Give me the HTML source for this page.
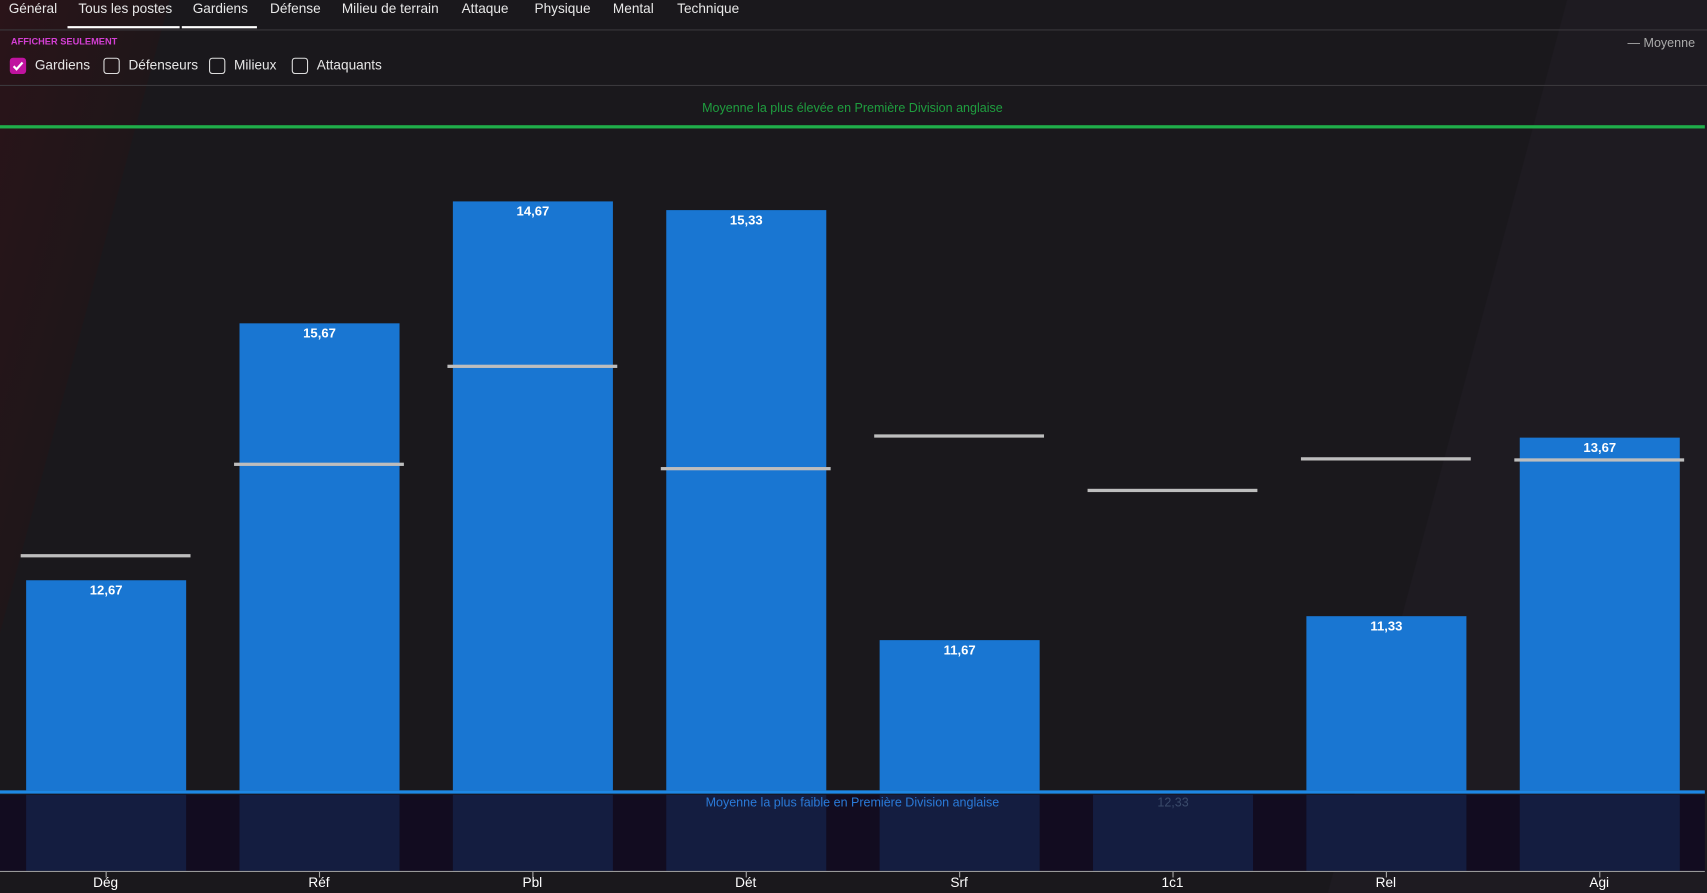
<!DOCTYPE html>
<html><head><meta charset="utf-8"><style>
html,body{margin:0;padding:0;background:#1a181c;overflow:hidden;width:1707px;height:893px}
#w{position:absolute;left:0;top:0;width:1568px;height:820px;transform:scale(1.08865);transform-origin:0 0;font-family:"Liberation Sans",sans-serif;color:#e6e6e6;
background:linear-gradient(105deg,#2a1419 0px,#1f1619 150px,#1a181c 151px,#1a181c 1390px,#1e1b21 1391px,#1e1b21 1568px)}
.a{position:absolute;white-space:nowrap}
.tab{top:1px;font-size:12.5px;color:#e8e8e8}
.cb{position:absolute;top:53px;width:13px;height:13px;border:1.5px solid #ddd;border-radius:3px}
.lbl{top:53px;font-size:12.5px}
.bar{position:absolute;width:147px;background:#1976d2;bottom:94px}
.val{position:absolute;width:147px;text-align:center;font-size:12px;font-weight:bold;color:#fff}
.avg{position:absolute;width:156px;height:3px;background:#bdbdbd}
.col{position:absolute;top:730px;height:70px;width:147px;background:#141d40}
.x{position:absolute;top:804px;width:100px;text-align:center;font-size:12.5px;color:#fff}
.tk{position:absolute;top:801px;width:1px;height:5px;background:#aaa}
</style></head><body><div id="w">
<div class="a tab" style="left:8px">Général</div>
<div class="a tab" style="left:72px">Tous les postes</div>
<div class="a tab" style="left:177px">Gardiens</div>
<div class="a tab" style="left:248px">Défense</div>
<div class="a tab" style="left:314px">Milieu de terrain</div>
<div class="a tab" style="left:424px">Attaque</div>
<div class="a tab" style="left:491px">Physique</div>
<div class="a tab" style="left:563px">Mental</div>
<div class="a tab" style="left:622px">Technique</div>
<div class="a" style="left:62px;top:24px;width:103px;height:2px;background:#fff"></div>
<div class="a" style="left:167px;top:24px;width:69px;height:2px;background:#fff"></div>
<div class="a" style="left:0;top:27px;width:1568px;height:1px;background:#3a383c"></div>
<div class="a" style="left:10px;top:33px;font-size:8.5px;font-weight:bold;color:#d43fd4">AFFICHER SEULEMENT</div>
<div class="cb" style="left:9px;background:#c0139f;border-color:#c0139f"><svg width="13" height="13" viewBox="0 0 13 13"><path d="M2.5 6.8l2.7 2.8 5.5-6.2" stroke="#fff" stroke-width="2" fill="none"/></svg></div>
<div class="a lbl" style="left:32px">Gardiens</div>
<div class="cb" style="left:95px"></div><div class="a lbl" style="left:118px">Défenseurs</div>
<div class="cb" style="left:192px"></div><div class="a lbl" style="left:215px">Milieux</div>
<div class="cb" style="left:268px"></div><div class="a lbl" style="left:291px">Attaquants</div>
<div class="a" style="left:1495px;top:34px;font-size:11.5px;color:#aaa">— Moyenne</div>
<div class="a" style="left:0;top:78px;width:1568px;height:1px;background:#3a383c"></div>
<div class="a" style="left:0;top:94px;width:1566px;text-align:center;font-size:11.5px;color:#1f9e3f">Moyenne la plus élevée en Première Division anglaise</div>
<div class="a" style="left:0;top:115px;width:1566px;height:3px;background:#1fae4a"></div>
<div class="a" style="left:0;top:730px;width:1566px;height:70px;background:#120c20"></div>
<div class="col" style="left:24px"></div><div class="col" style="left:220px"></div><div class="col" style="left:416px"></div><div class="col" style="left:612px"></div><div class="col" style="left:808px"></div><div class="col" style="left:1004px"></div><div class="col" style="left:1200px"></div><div class="col" style="left:1396px"></div>
<div class="bar" style="left:24px;top:533px"></div><div class="val" style="left:24px;top:535px">12,67</div>
<div class="bar" style="left:220px;top:297px"></div><div class="val" style="left:220px;top:299px">15,67</div>
<div class="bar" style="left:416px;top:185px"></div><div class="val" style="left:416px;top:187px">14,67</div>
<div class="bar" style="left:612px;top:193px"></div><div class="val" style="left:612px;top:195px">15,33</div>
<div class="bar" style="left:808px;top:588px"></div><div class="val" style="left:808px;top:590px">11,67</div>
<div class="bar" style="left:1200px;top:566px"></div><div class="val" style="left:1200px;top:568px">11,33</div>
<div class="bar" style="left:1396px;top:402px"></div><div class="val" style="left:1396px;top:404px">13,67</div>
<div class="avg" style="left:19px;top:509px"></div>
<div class="avg" style="left:215px;top:425px"></div>
<div class="avg" style="left:411px;top:335px"></div>
<div class="avg" style="left:607px;top:429px"></div>
<div class="avg" style="left:803px;top:399px"></div>
<div class="avg" style="left:999px;top:449px"></div>
<div class="avg" style="left:1195px;top:420px"></div>
<div class="avg" style="left:1391px;top:421px"></div>
<div class="a" style="left:0;top:726px;width:1566px;height:3px;background:#1e88e5"></div>
<div class="a" style="left:0;top:732px;width:1566px;text-align:center;font-size:11.5px;color:#2a7ad8">Moyenne la plus faible en Première Division anglaise</div>
<div class="a" style="left:1004px;top:732px;width:147px;text-align:center;font-size:11.5px;color:#3a4a6a">12,33</div>
<div class="a" style="left:0;top:800px;width:1566px;height:1px;background:#999"></div>
<div class="tk" style="left:97px"></div><div class="tk" style="left:293px"></div><div class="tk" style="left:489px"></div><div class="tk" style="left:685px"></div><div class="tk" style="left:881px"></div><div class="tk" style="left:1077px"></div><div class="tk" style="left:1273px"></div><div class="tk" style="left:1469px"></div>
<div class="x" style="left:47px">Dég</div><div class="x" style="left:243px">Réf</div><div class="x" style="left:439px">Pbl</div><div class="x" style="left:635px">Dét</div><div class="x" style="left:831px">Srf</div><div class="x" style="left:1027px">1c1</div><div class="x" style="left:1223px">Rel</div><div class="x" style="left:1419px">Agi</div>
</div></body></html>
